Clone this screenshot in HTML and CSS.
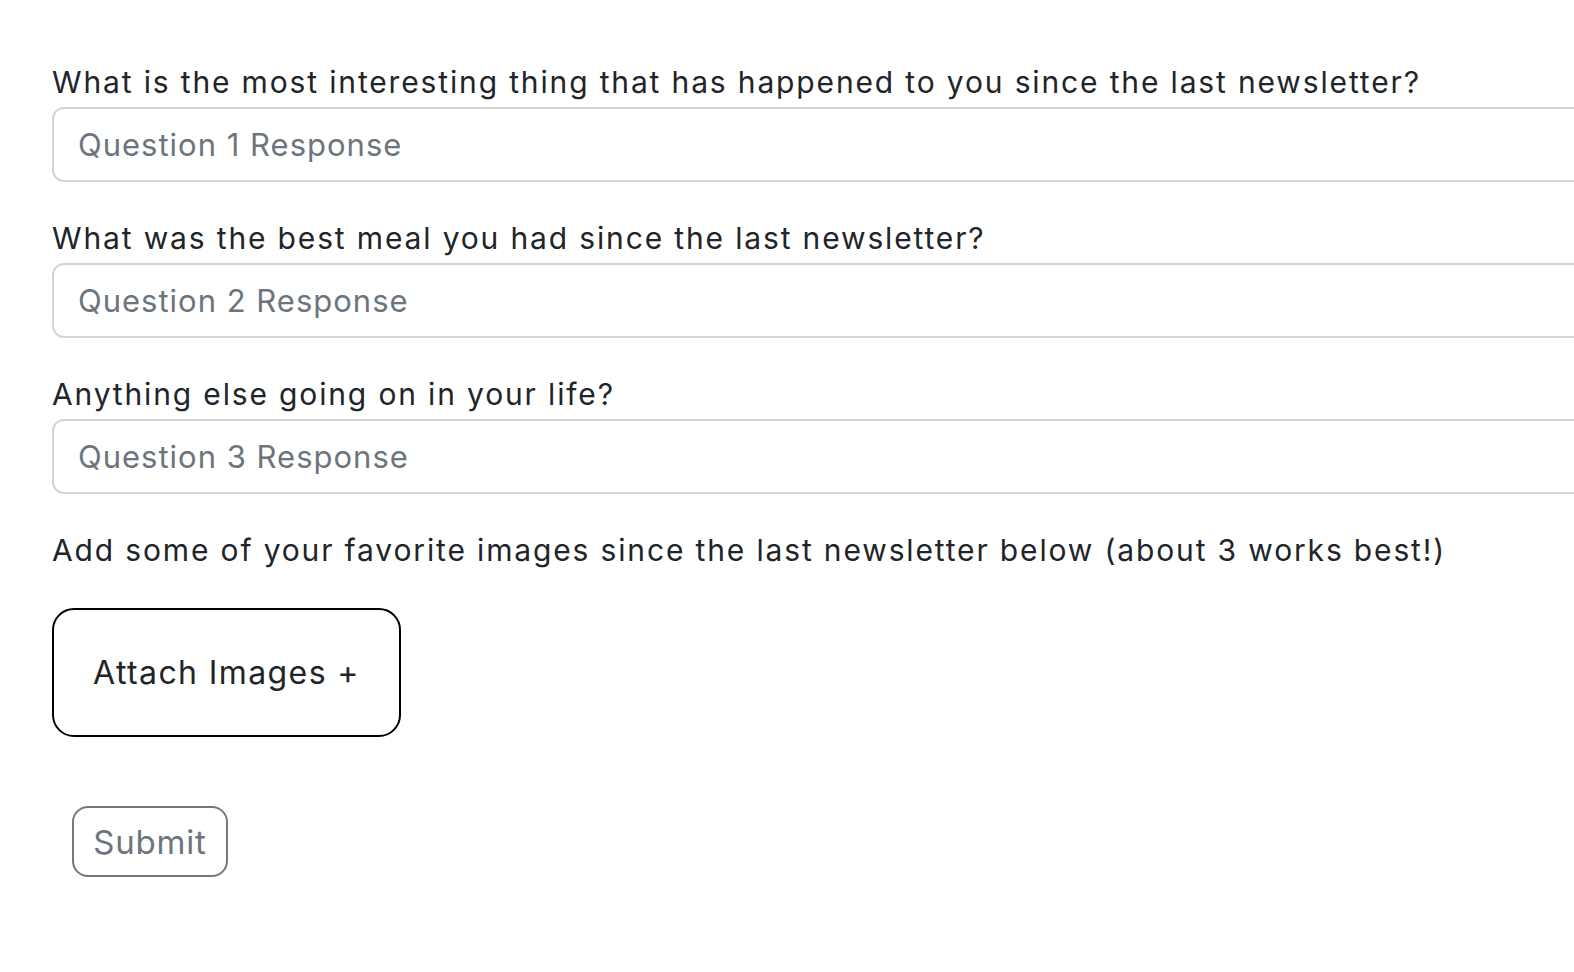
FILE: index.html
```html
<!DOCTYPE html>
<html lang="en">
<head>
<meta charset="utf-8">
<title>Newsletter Form</title>
<link rel="stylesheet" href="styles.css">
</head>
<body>
<form class="form">
  <div class="group">
    <label class="label" for="q1">What is the most interesting thing that has happened to you since the last newsletter?</label>
    <input class="input" id="q1" type="text" placeholder="Question 1 Response">
  </div>
  <div class="group">
    <label class="label" for="q2">What was the best meal you had since the last newsletter?</label>
    <input class="input" id="q2" type="text" placeholder="Question 2 Response">
  </div>
  <div class="group">
    <label class="label" for="q3">Anything else going on in your life?</label>
    <input class="input" id="q3" type="text" placeholder="Question 3 Response">
  </div>
  <div class="group group-last">
    <p class="label">Add some of your favorite images since the last newsletter below (about 3 works best!)</p>
  </div>
  <button class="attach" type="button">Attach Images +</button>
  <button class="submit" type="submit">Submit</button>
</form>
</body>
</html>
```

FILE: styles.css
```css
html, body {
  margin: 0;
  padding: 0;
  background: #ffffff;
  overflow: hidden;
}

body {
  font-family: Inter, "Liberation Sans", sans-serif;
  color: #212529;
}

.form {
  display: flex;
  flex-direction: column;
  align-items: flex-start;
  padding: 61px 0 0 52px;
  width: 1600px;
}

.group {
  display: flex;
  flex-direction: column;
  width: 100%;
  margin-bottom: 35px;
}

.group-last {
  margin-bottom: 33px;
}

.label {
  display: block;
  margin: 0 0 4px 0;
  font-size: 30px;
  line-height: 42px;
  letter-spacing: 1.85px;
  color: #212529;
  white-space: nowrap;
}

.input {
  box-sizing: border-box;
  width: 100%;
  height: 75px;
  margin: 0;
  padding: 0 24px;
  border: 2px solid #d1d4d8;
  border-radius: 12px;
  font-family: inherit;
  font-size: 31px;
  letter-spacing: 1px;
  color: #212529;
  background: #fff;
  outline: none;
}

.input::placeholder {
  color: #6c757d;
  opacity: 1;
}

.attach {
  box-sizing: border-box;
  width: 349px;
  height: 129px;
  margin: 0;
  padding: 0;
  border: 2px solid #000;
  border-radius: 22px;
  background: #fff;
  font-family: inherit;
  font-size: 32px;
  letter-spacing: 1.4px;
  color: #212529;
  cursor: pointer;
}

.submit {
  box-sizing: border-box;
  width: 156px;
  height: 71px;
  margin: 69px 0 0 20px;
  padding: 0;
  border: 2px solid #76777b;
  border-radius: 16px;
  background: #fff;
  font-family: inherit;
  font-size: 33px;
  letter-spacing: 0.8px;
  color: #6c757d;
  cursor: pointer;
}
```
